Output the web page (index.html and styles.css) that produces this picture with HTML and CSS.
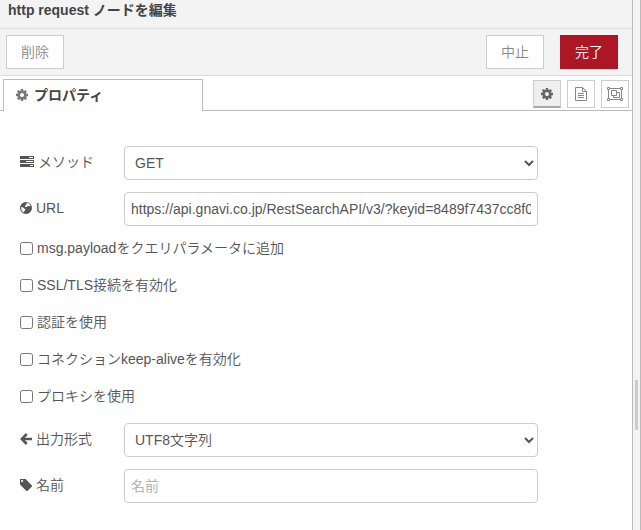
FILE: index.html
```html
<!DOCTYPE html>
<html lang="ja">
<head>
    <meta charset="UTF-8">
    <meta name="viewport" content="width=device-width, initial-scale=1.0">
    <title>http request ノードを編集</title>
    <link rel="stylesheet" href="styles.css">
</head>
<body>

<!-- icons -->
<svg class="sprite" aria-hidden="true">
    <symbol id="cog" viewBox="128 128 1536 1536"><path d="M1152 896q0-106-75-181t-181-75-181 75-75 181 75 181 181 75 181-75 75-181zm512-109v222q0 12-8 23t-20 13l-185 28q-19 54-39 91 35 50 107 138 10 12 10 25t-9 23q-27 37-99 108t-94 71q-12 0-26-9l-138-108q-44 23-91 38-16 136-29 186-7 28-36 28h-222q-14 0-24.500-8.500t-11.500-21.500l-28-184q-49-16-90-37l-141 107q-10 9-25 9-14 0-25-11-126-114-165-168-7-10-7-23 0-12 8-23 15-21 51-66.500t54-70.500q-27-50-41-99l-183-27q-13-2-21-12.500t-8-23.500v-222q0-12 8-23t19-13l186-28q14-46 39-92-40-57-107-138-10-12-10-24 0-10 9-23 26-36 98.500-107.500t94.500-71.500q13 0 26 10l138 107q44-23 91-38 16-136 29-186 7-28 36-28h222q14 0 24.500 8.500t11.500 21.500l28 184q49 16 90 37l142-107q9-9 24-9 13 0 25 10 129 119 165 170 7 8 7 22 0 12-8 23-15 21-51 66.500t-54 70.500q26 50 41 98l183 28q13 2 21 12.500t8 23.500z"/></symbol>
    <symbol id="doc" viewBox="0 0 12 14"><path fill="none" stroke="currentColor" d="M.5.5h7l4 4v9H.5zM7.500.500v4h4M3 6.500h6M3 8.500h6M3 10.500h6"/></symbol>
    <symbol id="group" viewBox="0 0 16 14"><path fill="none" stroke="currentColor" d="M3 1.500h10M3 12.500h10M1.500 3v8M14.500 3v8M.5.5h2v2h-2zM13.500.500h2v2h-2zM.5 11.500h2v2h-2zM13.500 11.500h2v2h-2zM4.500 3.500h5v5h-5zM9.500 5.500h3v5h-6v-2"/></symbol>
    <symbol id="tasks" viewBox="0 0 14 12"><path fill-rule="evenodd" d="M0 0h14v3H0zM9 1v1h4V1zM0 4h14v3H0zM6 5v1h7V5zM0 8h14v3H0zM10 9v1h3V9z"/></symbol>
    <symbol id="globe" viewBox="0 0 12 12"><path fill-rule="evenodd" d="M6 0a6 6 0 1 1 0 12A6 6 0 0 1 6 0zM6.500 1.200 8 1l1.700 1.300.8 1.500-1.200.5-1-.5-1.300 1-1.200.3-1-.8.800-1.200.8-.4zM1.200 5l1.500.3 2 1.500.8.7-.6 1.200-.9.7-.1 1.200-1.300-.8-1.100-1.800z"/></symbol>
    <symbol id="arrow" viewBox="0 0 12 12"><path fill="none" stroke="currentColor" stroke-width="2.500" d="M6.800 1 1.800 6l5 5M2 6h10"/></symbol>
    <symbol id="tag" viewBox="192 192 1451 1451"><path d="M576 448q0-53-37.500-90.500t-90.500-37.500-90.500 37.500-37.500 90.500 37.500 90.500 90.500 37.500 90.500-37.500 37.500-90.500zm1067 576q0 53-37 90l-491 492q-39 37-91 37-53 0-90-37l-715-716q-38-37-64.500-101t-26.500-117v-416q0-52 38-90t90-38h416q53 0 117 26.500t102 64.500l715 714q37 39 37 91z"/></symbol>
</svg>

<div class="editor">
    <div class="tray">
        <div class="tray-header">http request ノードを編集</div>

        <div class="tray-toolbar">
            <button type="button" class="btn btn-delete">削除</button>
            <button type="button" class="btn">中止</button>
            <button type="button" class="btn primary">完了</button>
        </div>

        <div class="tabs">
            <a href="#form" class="tab"><svg class="icon"><use href="#cog"/></svg>プロパティ</a>
            <div class="tab-buttons">
                <button type="button" class="tab-btn selected" aria-label="プロパティ"><svg class="icon"><use href="#cog"/></svg></button>
                <button type="button" class="tab-btn" aria-label="説明"><svg class="icon icon-doc"><use href="#doc"/></svg></button>
                <button type="button" class="tab-btn" aria-label="外観"><svg class="icon icon-group"><use href="#group"/></svg></button>
            </div>
        </div>

        <form class="form" id="form">
            <div class="form-row">
                <label for="method"><svg class="icon icon-tasks"><use href="#tasks"/></svg>メソッド</label>
                <select id="method">
                    <option>GET</option>
                    <option>POST</option>
                    <option>PUT</option>
                    <option>DELETE</option>
                </select>
            </div>
            <div class="form-row">
                <label for="url"><svg class="icon"><use href="#globe"/></svg>URL</label>
                <input type="text" id="url" value="https://api.gnavi.co.jp/RestSearchAPI/v3/?keyid=8489f7437cc8f0">
            </div>
            <div class="check-row">
                <input type="checkbox" id="payload">
                <label for="payload">msg.payloadをクエリパラメータに追加</label>
            </div>
            <div class="check-row">
                <input type="checkbox" id="tls">
                <label for="tls">SSL/TLS接続を有効化</label>
            </div>
            <div class="check-row">
                <input type="checkbox" id="auth">
                <label for="auth">認証を使用</label>
            </div>
            <div class="check-row">
                <input type="checkbox" id="keepalive">
                <label for="keepalive">コネクションkeep-aliveを有効化</label>
            </div>
            <div class="check-row">
                <input type="checkbox" id="proxy">
                <label for="proxy">プロキシを使用</label>
            </div>
            <div class="form-row">
                <label for="ret"><svg class="icon"><use href="#arrow"/></svg>出力形式</label>
                <select id="ret">
                    <option>UTF8文字列</option>
                </select>
            </div>
            <div class="form-row">
                <label for="name"><svg class="icon"><use href="#tag"/></svg>名前</label>
                <input type="text" id="name" placeholder="名前">
            </div>
        </form>
    </div>
    <div class="separator"><div class="grip"></div></div>
</div>

</body>
</html>
```
FILE: styles.css
```css
* {
    box-sizing: border-box;
}
body {
    margin: 0;
    font-family: "Liberation Sans", "Noto Sans CJK JP", sans-serif;
    font-size: 14px;
    font-weight: 350;
    line-height: 20px;
    color: #555;
    background: #fff;
}
button, input, select {
    font: inherit;
    color: inherit;
    margin: 0;
}
.sprite {
    display: none;
}
.icon {
    width: 12px;
    height: 12px;
    margin-right: 4px;
    fill: currentColor;
    flex: none;
}
.icon-tasks {
    width: 14px;
}
.editor {
    display: flex;
    min-height: 100vh;
}
.tray {
    flex: 1;
    min-width: 0;
}
.tray-header {
    padding: 0 8px 8px;
    font-weight: bold;
    color: #444;
    background: #f3f3f3;
    border-bottom: 1px solid #ddd;
}
.tray-toolbar {
    display: flex;
    gap: 16px;
    padding: 6px 14px 6px 6px;
    background: #f3f3f3;
    border-bottom: 1px solid #ddd;
}
.btn {
    height: 34px;
    padding: 0 14px;
    color: #888;
    background: #fff;
    border: 1px solid #ccc;
}
.btn-delete {
    margin-right: auto;
}
.btn.primary {
    color: #fff;
    background: #ad1625;
    border-color: #ad1625;
}

/* tabs */
.tabs {
    display: flex;
    justify-content: space-between;
    height: 35px;
    padding: 3px 3px 0;
    border-bottom: 1px solid #bbb;
}
.tab {
    display: flex;
    align-items: center;
    width: 200px;
    height: 32px;
    padding: 0 12px 2px;
    font-weight: bold;
    color: #444;
    text-decoration: none;
    background: #fff;
    border: 1px solid #bbb;
    border-bottom: 0;
}
.tab .icon {
    margin-right: 6px;
    color: #777;
}
.tab-buttons {
    display: flex;
    gap: 6px;
    padding-top: 1px;
}
.tab-btn {
    display: flex;
    align-items: center;
    justify-content: center;
    width: 28px;
    height: 28px;
    padding: 0;
    color: #888;
    background: #fff;
    border: 1px solid #ccc;
}
.tab-btn.selected {
    color: #666;
    background: #efefef;
    border-bottom: 2px solid #aaa;
}
.tab-btn .icon {
    margin: 0;
}
.tab-btn .icon-doc {
    height: 14px;
}
.tab-btn .icon-group {
    width: 16px;
    height: 14px;
}

/* form */
.form {
    padding: 35px 20px 20px;
}
.form-row {
    display: flex;
    align-items: center;
    gap: 4px;
    margin-bottom: 12px;
}
.form-row label {
    display: flex;
    align-items: center;
    width: 100px;
    padding-bottom: 2px;
}
.form-row input, .form-row select {
    width: 70%;
    height: 34px;
    padding: 0 6px;
    background: #fff;
    border: 1px solid #ccc;
    border-radius: 4px;
}
.form-row select {
    padding: 0 0 0 6px;
}
.form-row input::placeholder {
    color: #aaa;
}
.check-row {
    display: flex;
    align-items: center;
    gap: 4px;
    height: 20px;
    margin-bottom: 17px;
}
.check-row input {
    width: 13px;
    height: 13px;
}

.separator {
    display: flex;
    justify-content: center;
    width: 9px;
    background: #f3f3f3;
    border: 1px solid #bbb;
    border-width: 0 1px;
}
.grip {
    width: 3px;
    height: 50px;
    margin-top: 380px;
    background: #ccc;
}
```
